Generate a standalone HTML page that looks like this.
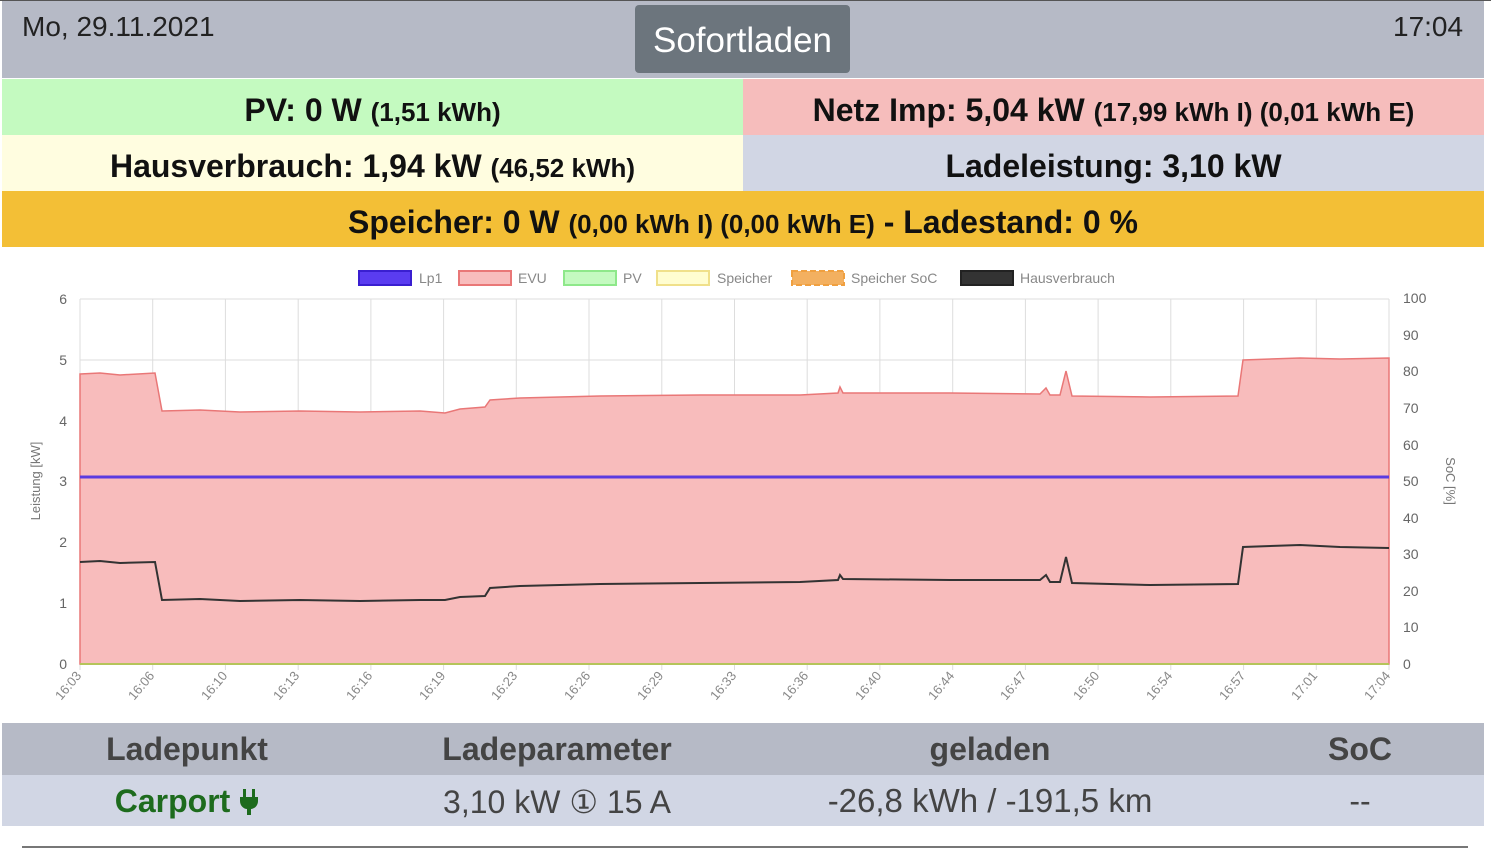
<!DOCTYPE html>
<html><head><meta charset="utf-8"><style>
body{margin:0;width:1491px;height:859px;background:#fff;font-family:"Liberation Sans",sans-serif;position:relative;overflow:hidden}
.a{position:absolute;box-sizing:border-box;text-align:center;white-space:nowrap}
.b{font-weight:bold;font-size:32px;color:#111}
.b small{font-size:26px}
</style></head><body>
<div class="a" style="left:0;top:0;width:1491px;height:1px;background:#555"></div>
<div class="a" style="left:2px;top:1px;width:1482px;height:77px;background:#b6bac6"></div>
<div class="a" style="left:22px;top:11px;font-size:28px;color:#222;text-align:left">Mo, 29.11.2021</div>
<div class="a" style="left:1393px;top:11px;font-size:28px;color:#222">17:04</div>
<div class="a" style="left:635px;top:5px;width:215px;height:68px;background:#6c757d;border-radius:4px;color:#fff;font-size:35px;line-height:72px">Sofortladen</div>
<div class="a b" style="left:2px;top:79px;width:741px;height:56px;background:#c4fac0;line-height:62px">PV: 0 W <small>(1,51 kWh)</small></div>
<div class="a b" style="left:743px;top:79px;width:741px;height:56px;background:#f6bdbc;line-height:62px">Netz Imp: 5,04 kW <small>(17,99 kWh I) (0,01 kWh E)</small></div>
<div class="a b" style="left:2px;top:135px;width:741px;height:56px;background:#fffde0;line-height:62px">Hausverbrauch: 1,94 kW <small>(46,52 kWh)</small></div>
<div class="a b" style="left:743px;top:135px;width:741px;height:56px;background:#d1d6e4;line-height:62px">Ladeleistung: 3,10 kW</div>
<div class="a b" style="left:2px;top:191px;width:1482px;height:56px;background:#f3bf36;line-height:62px">Speicher: 0 W <small>(0,00 kWh I) (0,00 kWh E)</small> - Ladestand: 0 %</div>
<svg class="a" style="left:0;top:250px" width="1491" height="472" viewBox="0 250 1491 472" font-family="Liberation Sans,sans-serif">
<g stroke="#ddd" stroke-width="1">
<line x1="80" y1="299" x2="1389" y2="299"/><line x1="80" y1="360" x2="1389" y2="360"/><line x1="80" y1="421" x2="1389" y2="421"/><line x1="80" y1="481" x2="1389" y2="481"/><line x1="80" y1="542" x2="1389" y2="542"/><line x1="80" y1="603" x2="1389" y2="603"/>
<line x1="80" y1="299" x2="80" y2="670"/><line x1="152.7" y1="299" x2="152.7" y2="670"/><line x1="225.4" y1="299" x2="225.4" y2="670"/><line x1="298.2" y1="299" x2="298.2" y2="670"/><line x1="370.9" y1="299" x2="370.9" y2="670"/><line x1="443.6" y1="299" x2="443.6" y2="670"/><line x1="516.3" y1="299" x2="516.3" y2="670"/><line x1="589" y1="299" x2="589" y2="670"/><line x1="661.8" y1="299" x2="661.8" y2="670"/><line x1="734.5" y1="299" x2="734.5" y2="670"/><line x1="807.2" y1="299" x2="807.2" y2="670"/><line x1="879.9" y1="299" x2="879.9" y2="670"/><line x1="952.7" y1="299" x2="952.7" y2="670"/><line x1="1025.4" y1="299" x2="1025.4" y2="670"/><line x1="1098.1" y1="299" x2="1098.1" y2="670"/><line x1="1170.8" y1="299" x2="1170.8" y2="670"/><line x1="1243.6" y1="299" x2="1243.6" y2="670"/><line x1="1316.3" y1="299" x2="1316.3" y2="670"/><line x1="1389" y1="299" x2="1389" y2="670"/>
</g>
<path d="M80 374 L100 373 L120 375 L155 373 L162 411 L200 410 L240 412 L300 411 L360 412 L420 411 L445 413 L460 409 L485 407 L490 400 L520 398 L600 396 L700 395 L800 395 L838 393 L840 387 L843 393 L950 393 L1040 394 L1046 388 L1050 395 L1060 395 L1066 371 L1072 396 L1150 397 L1238 396 L1243 360 L1300 358 L1340 359 L1389 358 L1389 664 L80 664 Z" fill="#f8bcbc" stroke="#e97777" stroke-width="1.5"/>
<line x1="80" y1="477" x2="1389" y2="477" stroke="#5b3be0" stroke-width="3"/>
<line x1="80" y1="664" x2="1389" y2="664" stroke="#b5c45a" stroke-width="2"/>
<path d="M80 562 L100 561 L120 563 L155 562 L162 600 L200 599 L240 601 L300 600 L360 601 L420 600 L445 600 L460 597 L485 596 L490 588 L520 586 L600 584 L700 583 L800 582 L838 580 L840 575 L843 579 L950 580 L1040 580 L1046 575 L1050 582 L1060 582 L1066 557 L1072 583 L1150 585 L1238 584 L1243 547 L1300 545 L1340 547 L1389 548" fill="none" stroke="#333" stroke-width="2"/>
<g font-size="14" fill="#666" text-anchor="end">
<text x="67" y="304">6</text><text x="67" y="365">5</text><text x="67" y="426">4</text><text x="67" y="486">3</text><text x="67" y="547">2</text><text x="67" y="608">1</text><text x="67" y="669">0</text>
</g>
<g font-size="14" fill="#666" text-anchor="start">
<text x="1403" y="303">100</text><text x="1403" y="340">90</text><text x="1403" y="376">80</text><text x="1403" y="413">70</text><text x="1403" y="450">60</text><text x="1403" y="486">50</text><text x="1403" y="523">40</text><text x="1403" y="559">30</text><text x="1403" y="596">20</text><text x="1403" y="632">10</text><text x="1403" y="669">0</text>
</g>
<text transform="translate(40,481) rotate(-90)" font-size="13" fill="#777" text-anchor="middle">Leistung [kW]</text>
<text transform="translate(1446,481) rotate(90)" font-size="13" fill="#777" text-anchor="middle">SoC [%]</text>
<g font-size="13" fill="#888" text-anchor="end">
<text transform="translate(82,676) rotate(-50)">16:03</text><text transform="translate(155,676) rotate(-50)">16:06</text><text transform="translate(228,676) rotate(-50)">16:10</text><text transform="translate(300,676) rotate(-50)">16:13</text><text transform="translate(373,676) rotate(-50)">16:16</text><text transform="translate(446,676) rotate(-50)">16:19</text><text transform="translate(518,676) rotate(-50)">16:23</text><text transform="translate(591,676) rotate(-50)">16:26</text><text transform="translate(664,676) rotate(-50)">16:29</text><text transform="translate(737,676) rotate(-50)">16:33</text><text transform="translate(809,676) rotate(-50)">16:36</text><text transform="translate(882,676) rotate(-50)">16:40</text><text transform="translate(955,676) rotate(-50)">16:44</text><text transform="translate(1027,676) rotate(-50)">16:47</text><text transform="translate(1100,676) rotate(-50)">16:50</text><text transform="translate(1173,676) rotate(-50)">16:54</text><text transform="translate(1246,676) rotate(-50)">16:57</text><text transform="translate(1318,676) rotate(-50)">17:01</text><text transform="translate(1391,676) rotate(-50)">17:04</text>
</g>
<g font-size="14" fill="#888">
<rect x="359" y="271" width="52" height="14" fill="#5a3cf0" stroke="#3a1fd0" stroke-width="2"/><text x="419" y="283">Lp1</text>
<rect x="459" y="271" width="52" height="14" fill="#f8bcbc" stroke="#e97777" stroke-width="2"/><text x="518" y="283">EVU</text>
<rect x="564" y="271" width="52" height="14" fill="#c4fac0" stroke="#8ee88a" stroke-width="2"/><text x="623" y="283">PV</text>
<rect x="657" y="271" width="52" height="14" fill="#fffdd0" stroke="#f0e08a" stroke-width="2"/><text x="717" y="283">Speicher</text>
<rect x="792" y="271" width="52" height="14" fill="#f3b060" stroke="#f0a040" stroke-width="2" stroke-dasharray="6 3"/><text x="851" y="283">Speicher SoC</text>
<rect x="961" y="271" width="52" height="14" fill="#333" stroke="#222" stroke-width="2"/><text x="1020" y="283">Hausverbrauch</text>
</g>
</svg>
<div class="a" style="left:2px;top:723px;width:1482px;height:52px;background:#b6bac6"></div>
<div class="a" style="left:2px;top:775px;width:1482px;height:51px;background:#d1d6e4"></div>
<div class="a" style="left:2px;top:731px;width:370px;font-size:32px;font-weight:bold;color:#444">Ladepunkt</div>
<div class="a" style="left:372px;top:731px;width:370px;font-size:32px;font-weight:bold;color:#444">Ladeparameter</div>
<div class="a" style="left:805px;top:731px;width:370px;font-size:32px;font-weight:bold;color:#444">geladen</div>
<div class="a" style="left:1175px;top:731px;width:370px;font-size:32px;font-weight:bold;color:#444">SoC</div>
<div class="a" style="left:2px;top:783px;width:370px;font-size:32px;font-weight:bold;color:#1d6b1d">Carport <svg width="20" height="26" viewBox="0 0 20 26" style="vertical-align:-3px"><rect x="4" y="0" width="3" height="8" fill="#1d6b1d"/><rect x="13" y="0" width="3" height="8" fill="#1d6b1d"/><path d="M1 8h18v4c0 5-4 8-7 8v6h-4v-6c-3 0-7-3-7-8z" fill="#1d6b1d"/></svg></div>
<div class="a" style="left:372px;top:783px;width:370px;font-size:32px;color:#444">3,10 kW ① 15 A</div>
<div class="a" style="left:805px;top:782px;width:370px;font-size:33px;color:#444">-26,8 kWh / -191,5 km</div>
<div class="a" style="left:1175px;top:783px;width:370px;font-size:32px;color:#444">--</div>
<div class="a" style="left:22px;top:846px;width:1446px;height:2px;background:#777"></div>
</body></html>
